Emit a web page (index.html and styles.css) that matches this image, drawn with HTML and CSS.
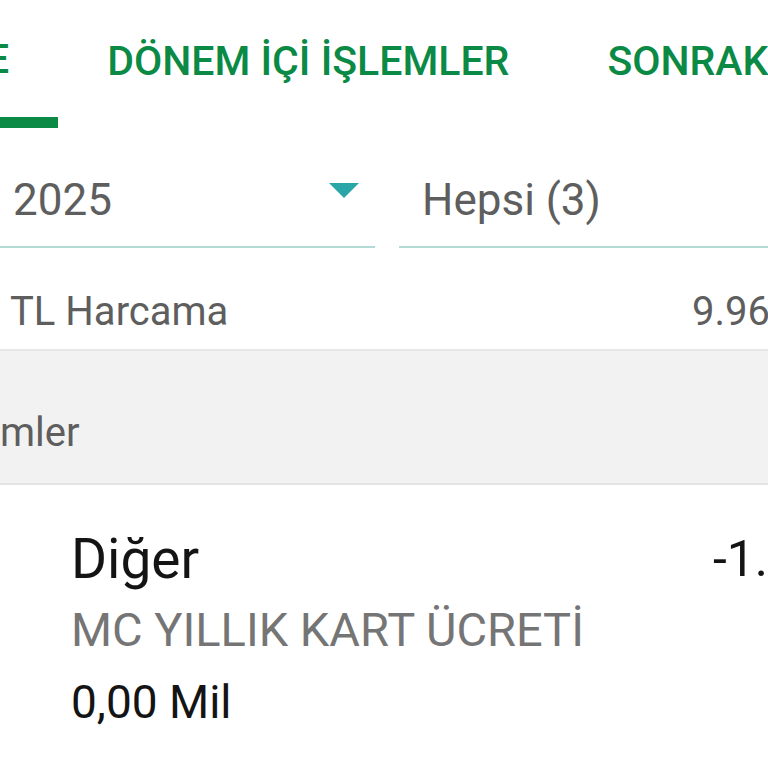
FILE: index.html
```html
<!DOCTYPE html>
<html lang="tr">

<head>
    <meta charset="UTF-8">
    <meta name="viewport" content="width=device-width, initial-scale=1.0">
    <title>Dönem İçi İşlemler</title>

    <link rel="stylesheet" href="styles.css">
</head>

<body>

    <div class="screen">
        <nav class="tabs">
            <div class="tab tab-active">E</div>
            <div class="tab">DÖNEM İÇİ İŞLEMLER</div>
            <div class="tab">SONRAK</div>
        </nav>

        <div class="filters">
            <div class="field field-period">
                <span>2025</span>
                <span class="caret"></span>
            </div>
            <div class="field field-type">
                <span>Hepsi (3)</span>
            </div>
        </div>

        <div class="summary">
            <span>TL Harcama</span>
            <span class="summary-amount">9.96</span>
        </div>

        <div class="section-title">mler</div>

        <div class="transaction">
            <div class="transaction-info">
                <div class="transaction-name">Diğer</div>
                <div class="transaction-desc">MC YILLIK KART ÜCRETİ</div>
                <div class="transaction-mil">0,00 Mil</div>
            </div>
            <div class="transaction-amount">-1.</div>
        </div>
    </div>

</body>

</html>
```

FILE: styles.css
```css
body {
    margin: 0;
    padding: 0;
    background-color: #fff;
    font-family: Roboto, "Noto Sans", sans-serif;
    overflow: hidden;
}

.screen {
    width: 768px;
    height: 768px;
    overflow: hidden;
}

.tabs {
    display: flex;
    height: 128px;
    white-space: nowrap;
}

.tab {
    display: flex;
    align-items: center;
    padding: 0 49px 6px;
    box-sizing: border-box;
    font-size: 41px;
    font-weight: 500;
    color: #0a8a45;
}

.tab-active {
    margin-left: -14px;
    padding-left: 0;
    padding-bottom: 0;
    border-bottom: 11px solid #0a8a45;
}

.filters {
    display: flex;
    gap: 24px;
    height: 120px;
}

.field {
    display: flex;
    align-items: center;
    flex: 1 1 0;
    min-width: 0;
    padding-top: 26px;
    border-bottom: 2px solid #b3dbd6;
    font-size: 44px;
    color: #5e5e5e;
}

.field-period {
    justify-content: space-between;
    padding-left: 13px;
    padding-right: 16px;
}

.field-type {
    padding-left: 23px;
}

.caret {
    width: 0;
    height: 0;
    border-left: 15px solid transparent;
    border-right: 15px solid transparent;
    border-top: 15px solid #2aa6a8;
    margin-bottom: 20px;
}

.summary {
    display: flex;
    justify-content: space-between;
    align-items: center;
    height: 103px;
    padding-top: 26px;
    padding-left: 10px;
    box-sizing: border-box;
    font-size: 40px;
    color: #5e5e5e;
    border-bottom: 2px solid #e6e6e6;
}

.summary-amount {
    margin-right: -2px;
}

.section-title {
    display: flex;
    align-items: center;
    height: 134px;
    padding-top: 30px;
    box-sizing: border-box;
    background-color: #f2f2f2;
    border-bottom: 2px solid #e3e3e3;
    font-size: 40px;
    color: #5e5e5e;
}

.transaction {
    display: flex;
    justify-content: space-between;
    padding: 40px 0 0 71px;
}

.transaction-name {
    font-size: 55px;
    line-height: 68px;
    color: #141414;
}

.transaction-desc {
    margin-top: 2px;
    font-size: 47px;
    line-height: 70px;
    color: #757575;
}

.transaction-mil {
    margin-top: 2px;
    font-size: 46px;
    line-height: 70px;
    color: #141414;
}

.transaction-amount {
    font-size: 50px;
    line-height: 68px;
    color: #141414;
}
```
